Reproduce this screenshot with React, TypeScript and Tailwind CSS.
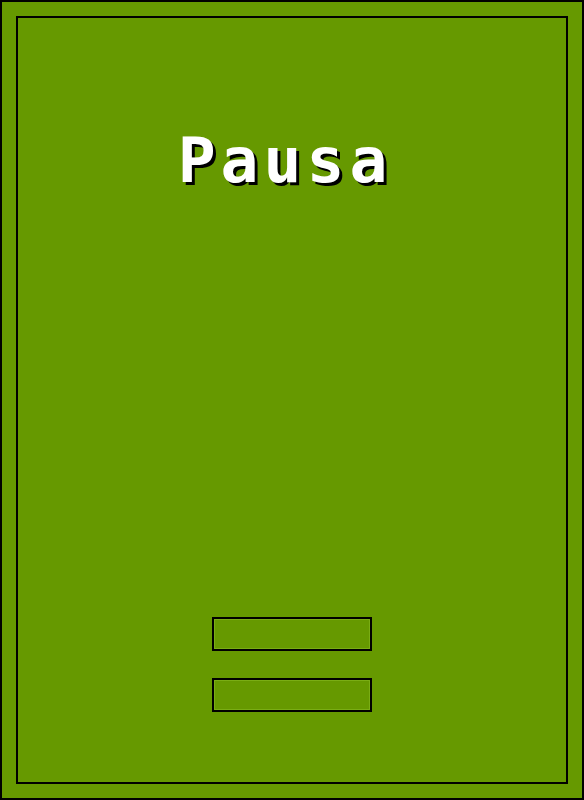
export default function App() {
  return (
    <div className="w-[584px] h-[800px] border-2 border-black bg-[#669900] p-[14px]">
      <div className="h-full border-2 border-black flex flex-col items-center">
        <h1 className="mt-[111px] pr-[14px] font-['DejaVu_Sans_Mono',monospace] text-[63px] leading-none font-bold tracking-[5px] text-white [text-shadow:3px_3px_0_#000]">
          Pausa
        </h1>
        <div className="mt-auto mb-[70px] flex flex-col gap-[27px]">
          <button className="w-[160px] h-[34px] border-2 border-black shadow-[inset_0_0_0_1px_#7aad14]" />
          <button className="w-[160px] h-[34px] border-2 border-black shadow-[inset_0_0_0_1px_#7aad14]" />
        </div>
      </div>
    </div>
  )
}
